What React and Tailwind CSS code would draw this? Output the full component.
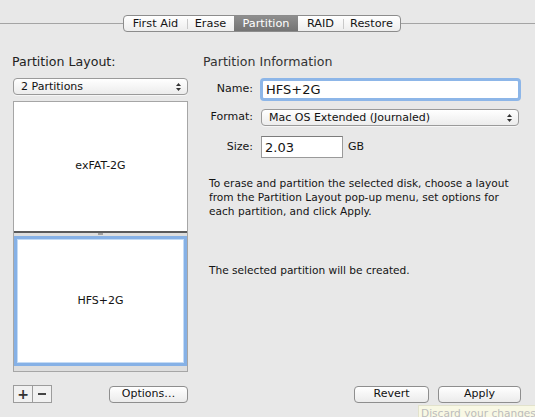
import React from 'react'

const font = { fontFamily: '"DejaVu Sans", "Liberation Sans", sans-serif' }

const Arrows = () => (
  <svg width="7" height="10" viewBox="0 0 7 10" className="shrink-0">
    <path d="M3.5 1 L6 4 H1 Z" fill="#333" />
    <path d="M3.5 9 L6 6 H1 Z" fill="#333" />
  </svg>
)

const Popup = ({ label, className = '' }) => (
  <div
    className={`flex items-center justify-between h-[17px] rounded-[4px] border border-[#9a9a9a] bg-gradient-to-b from-white to-[#ececec] pl-[7px] pr-[5px] text-[11px] text-[#111] shadow-[0_1px_0_rgba(255,255,255,0.6)] ${className}`}
  >
    <span className="leading-none">{label}</span>
    <Arrows />
  </div>
)

const PushButton = ({ children, className = '' }) => (
  <div
    className={`flex items-center justify-center h-[17px] rounded-[4px] border border-[#8e8e8e] bg-gradient-to-b from-white to-[#ebebeb] text-[11px] text-[#111] ${className}`}
  >
    {children}
  </div>
)

const tabs = [
  { label: 'First Aid', w: 'w-[63px]' },
  { label: 'Erase', w: 'w-[47px]' },
  { label: 'Partition', w: 'w-[64px]', active: true },
  { label: 'RAID', w: 'w-[45px]' },
  { label: 'Restore', w: 'w-[57px]' },
]

const TabBar = () => (
  <div className="flex items-center pt-[15px]">
    <div className="flex-1 h-px bg-[#a4a4a4]" />
    <div className="flex h-[17px] rounded-[4px] border border-[#8c8c8c] bg-gradient-to-b from-white to-[#ededed] overflow-hidden">
      {tabs.map((t, i) => (
        <div
          key={t.label}
          className={`relative flex items-center justify-center text-[11.3px] leading-none ${t.w} ${
            t.active ? 'bg-gradient-to-b from-[#8e8e8e] to-[#747474] text-white' : 'text-[#141414]'
          }`}
        >
          {i > 0 && !t.active && !tabs[i - 1].active && (
            <span className="absolute left-0 top-[3px] h-[10px] w-px bg-[#c9c9c9]" />
          )}
          {t.label}
        </div>
      ))}
    </div>
    <div className="w-[134px] h-px bg-[#a4a4a4]" />
  </div>
)

export default function App() {
  return (
    <div
      className="relative w-[535px] h-[417px] overflow-hidden bg-[#e8e8e8] text-[#141414]"
      style={font}
    >
      <TabBar />

      <div className="flex h-[349px] mt-[22px]">
        {/* left column */}
        <div className="ml-[13px] w-[175px] flex flex-col">
          <div className="-ml-[1px] h-[16px] text-[12.6px] leading-[16px] text-[#222]">Partition Layout:</div>
          <Popup label="2 Partitions" className="mt-[8px]" />
          <div className="mt-[6px] h-[271px] border border-[#a6a6a6] bg-[#dedede] flex flex-col">
            <div className="h-[131px] bg-white border-b-2 border-[#5a5a5a] flex items-center justify-center text-[11px]">
              exFAT-2G
            </div>
            <div className="h-[3px] flex justify-center">
              <div className="w-[5px] h-[2px] bg-[#a0a0a0]" />
            </div>
            <div className="h-[130px] bg-white border-[3px] border-[#86b1e6] shadow-[inset_0_0_0_1px_#c4dbf5] flex items-center justify-center text-[11px]">
              HFS+2G
            </div>
          </div>
          <div className="mt-auto flex items-end justify-between">
            <div className="flex h-[18px] border border-[#9c9c9c] bg-[#f1f1f1]">
              <div className="w-[19px] flex items-center justify-center border-r border-[#9c9c9c] text-[14px] font-bold leading-none text-[#333]">+</div>
              <div className="w-[18px] flex items-center justify-center">
                <div className="w-[8px] h-[2px] bg-[#444]" />
              </div>
            </div>
            <PushButton className="w-[79px]">Options…</PushButton>
          </div>
        </div>

        {/* right column */}
        <div className="ml-[15px] w-[318px] flex flex-col">
          <div className="h-[16px] text-[12.6px] leading-[16px] text-[#333]">Partition Information</div>

          <div className="mt-[8px] flex items-center">
            <div className="w-[51px] text-right text-[11px] pr-[1px]">Name:</div>
            <div className="ml-[6px] w-[261px] h-[23px] rounded-[4px] border-[3px] border-[#8db6e8] bg-white flex items-center pl-[3px] text-[13px] leading-none">
              HFS+2G
            </div>
          </div>

          <div className="mt-[8px] flex items-center">
            <div className="w-[51px] text-right text-[11px] pr-[1px]">Format:</div>
            <Popup label="Mac OS Extended (Journaled)" className="ml-[7px] w-[258px]" />
          </div>

          <div className="mt-[10px] flex items-center">
            <div className="w-[51px] text-right text-[11px] pr-[1px]">Size:</div>
            <div className="ml-[7px] w-[82px] h-[22px] border border-[#9a9a9a] border-t-[#7c7c7c] bg-white flex items-center pl-[3px] text-[13px] leading-none">
              2.03
            </div>
            <div className="ml-[5px] text-[11px]">GB</div>
          </div>

          <p className="mt-[18px] ml-[6px] text-[10.6px] leading-[14px]">
            To erase and partition the selected disk, choose a layout
            <br />
            from the Partition Layout pop-up menu, set options for
            <br />
            each partition, and click Apply.
          </p>

          <p className="mt-[45px] ml-[6px] text-[10.6px] leading-[14px]">The selected partition will be created.</p>

          <div className="mt-auto flex justify-end gap-[9px]">
            <PushButton className="w-[75px]">Revert</PushButton>
            <PushButton className="w-[83px]">Apply</PushButton>
          </div>
        </div>
      </div>

      {/* tooltip */}
      <div className="absolute left-[418px] top-[405px] w-[130px] h-[20px] bg-[#f8f8e4] border-l border-t border-[#e2e2cc] pl-[2px] text-[10.6px] leading-[14px] text-[#bcbcbc]">
        Discard your changes
      </div>
    </div>
  )
}
